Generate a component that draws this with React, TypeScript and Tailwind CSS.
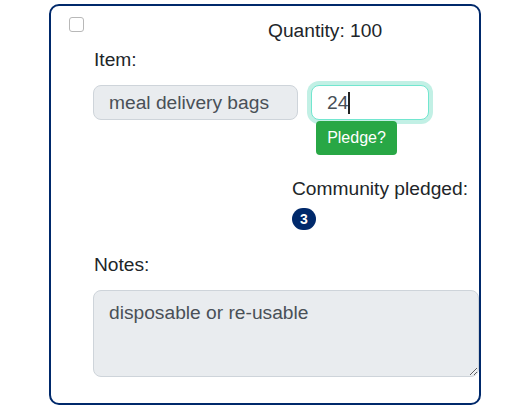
import React from "react";

export default function App() {
  return (
    <div className="w-[531px] h-[408px] bg-white overflow-hidden" style={{ fontFamily: '"Liberation Sans", Arial, sans-serif' }}>
      <div className="mt-[4px] ml-[49px] w-[432px] h-[401px] border-2 border-[#00296b] rounded-[10px] text-[#212529]">
        <div className="flex items-start">
          <div className="mt-[11px] ml-[18px] w-[15px] h-[15px] border border-[#b8b8b8] rounded-[3px] bg-white"></div>
          <span className="ml-[184px] mt-[14px] text-[19.2px] leading-[22px]">Quantity: 100</span>
        </div>
        <div className="mt-[7px] ml-[43px] text-[19.2px] leading-[22px]">Item:</div>
        <div className="mt-[14px] ml-[42px] flex items-start">
          <div className="w-[205px] h-[35px] border border-[#ced4da] bg-[#e9ecef] rounded-[8px] px-[15px] flex items-center text-[19.2px] leading-[22px] text-[#495057]">
            meal delivery bags
          </div>
          <div className="ml-[13px] flex flex-col">
            <div className="w-[118px] h-[35px] border border-[#72e6cf] shadow-[0_0_0_4px_#c2f0e5] bg-white rounded-[8px] px-[15px] flex items-center text-[19.2px] leading-[22px] text-[#495057]">
              <span>24</span>
              <span className="inline-block w-[2px] h-[22px] bg-[#222]"></span>
            </div>
            <div className="relative mt-[1px] ml-[5px] w-[81px] h-[34px] bg-[#28a745] rounded-[4px] text-white text-[16px] leading-[20px] flex items-center justify-center">
              Pledge?
            </div>
          </div>
        </div>
        <div className="mt-[23px] ml-[241px] text-[19.2px] leading-[22px]">Community pledged:</div>
        <div className="mt-[8px] ml-[241px] w-[24px] h-[22px] rounded-full bg-[#00296b] text-white text-[14px] leading-[16px] font-bold flex items-center justify-center">
          3
        </div>
        <div className="mt-[24px] ml-[43px] text-[19.2px] leading-[22px]">Notes:</div>
        <textarea
          readOnly
          defaultValue="disposable or re-usable"
          className="block mt-[14px] ml-[42px] w-[386px] h-[87px] border border-[#ced4da] bg-[#e9ecef] rounded-[8px] px-[15px] pt-[8px] pb-[6px] text-[19.2px] leading-[28.8px] text-[#495057] outline-none"
          style={{ fontFamily: '"Liberation Sans", Arial, sans-serif' }}
        />
      </div>
    </div>
  );
}
